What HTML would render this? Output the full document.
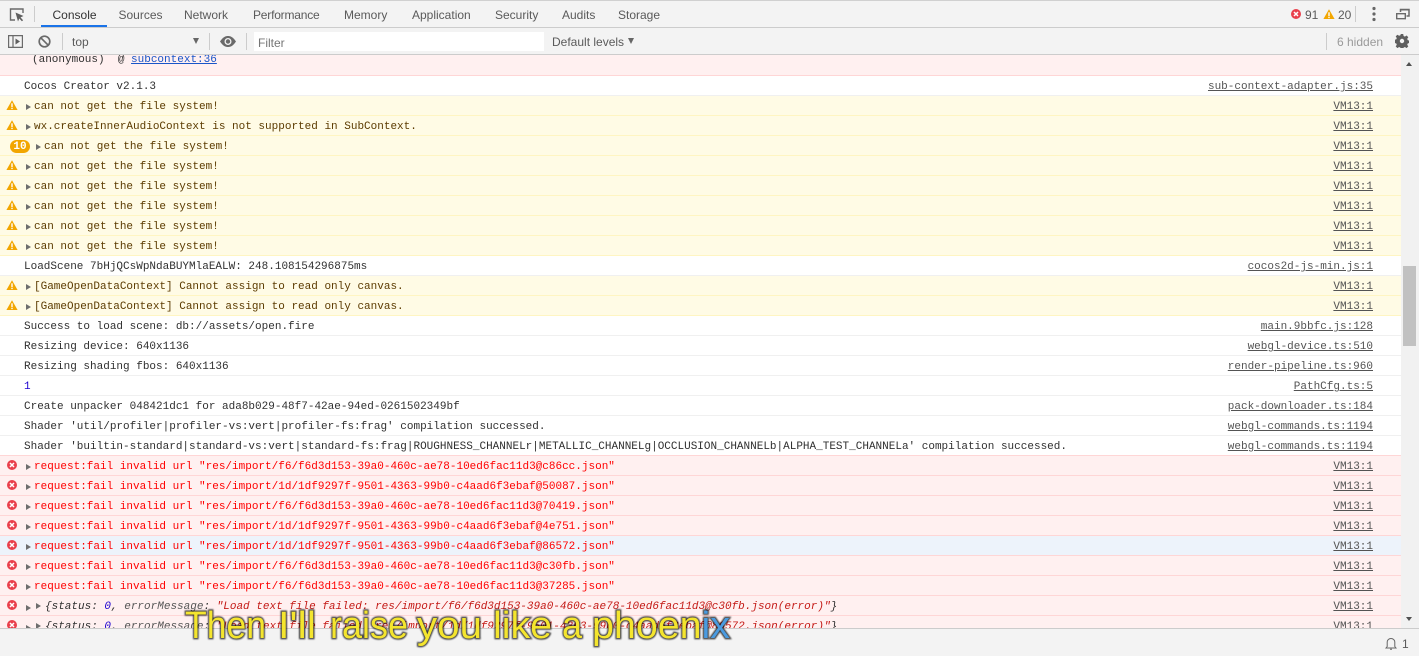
<!DOCTYPE html>
<html><head><meta charset="utf-8"><title>DevTools Console</title>
<style>
html,body{margin:0;padding:0;width:1419px;height:656px;overflow:hidden;background:#fff}
#app{position:relative;width:1419px;height:656px;overflow:hidden;font-family:"Liberation Sans",sans-serif;font-size:12px;color:#333}
.bar{position:absolute;left:0;width:1419px;background:#f3f3f3;box-sizing:border-box}
.t{position:absolute;top:8px;line-height:14px;color:#5a5a5a;white-space:nowrap}
.sep{position:absolute;width:1px;background:#ccc}
#log{position:absolute;left:0;top:55px;width:1401px;height:573px;overflow:hidden;font-family:"Liberation Mono",monospace;font-size:11px;color:#303030}
.r{position:absolute;left:0;width:1401px;height:20px;box-sizing:border-box;border-bottom:1px solid #f0f0f0;background:#fff;line-height:20px;white-space:pre}
.w{background:#fffbe5;border-bottom-color:#fff5c2;color:#5c3b00}
.e{background:#fff0f0;border-bottom-color:#ffd6d6;color:#f00}
.s{background:#edf3fb}
.m{position:absolute;left:24px;top:1px}
.a .m{left:34px}
.l{position:absolute;right:28px;top:1px;color:#545454;text-decoration:underline}
.a:before{content:"";position:absolute;left:26px;top:8px;border-left:5px solid #6e6e6e;border-top:3px solid transparent;border-bottom:3px solid transparent}
.x:before{top:9px}
.ar2{position:absolute;left:36px;top:7px;border-left:5px solid #6e6e6e;border-top:3px solid transparent;border-bottom:3px solid transparent}
.ic{position:absolute;left:6px;top:3px;width:12px;height:12px}
.st{color:#303030;font-style:italic}.st i{color:#c41a16}.st b{font-weight:normal;color:#1c00cf}.st u{text-decoration:none;color:#565656}
#sb{position:absolute;left:1401px;top:55px;width:18px;height:573px;background:#f1f1f1}
</style></head>
<body><div id="app">
<svg width="0" height="0" style="position:absolute"><defs>
<g id="wi"><path d="M6 1.200 11.600 11H.4Z" fill="#f2a600"/><rect x="5.300" y="4.300" width="1.400" height="3.700" fill="#fff"/><rect x="5.300" y="8.700" width="1.400" height="1.400" fill="#fff"/></g>
<g id="ei"><circle cx="6" cy="6" r="5" fill="#e9404c"/><path d="M4 4l4 4M8 4 4 8" stroke="#fff" stroke-width="1.500"/></g>
<linearGradient id="gr" gradientUnits="userSpaceOnUse" x1="0" y1="0" x2="1419" y2="0"><stop offset="0.4955" stop-color="#f4e52e"/><stop offset="0.4956" stop-color="#4a9be0"/></linearGradient>
<filter id="bl" x="-5%" y="-30%" width="110%" height="160%"><feGaussianBlur stdDeviation="0.8"/></filter>
</defs></svg>

<div class="bar" style="top:0;height:28px;border-top:1px solid #d0d0d0;border-bottom:1px solid #ccc"></div>
<svg style="position:absolute;left:9px;top:7px" width="16" height="16" viewBox="0 0 16 16"><path d="M6 13H1.500V2H14V6" fill="none" stroke="#6a6a6a" stroke-width="1.400"/><path d="M6.500 5.500 14.500 9l-3 1.400 2.600 2.800-1.200 1.100-2.600-2.800L9 14.500Z" fill="#5f5f5f"/></svg>
<div class="sep" style="left:34px;top:6px;height:16px"></div>
<div style="position:absolute;left:41px;top:25px;width:66px;height:2px;background:#1a73e8"></div>
<div class="t" style="left:52.500px;color:#333">Console</div>
<div class="t" style="left:118.500px">Sources</div>
<div class="t" style="left:184px">Network</div>
<div class="t" style="left:253px;letter-spacing:-.2px">Performance</div>
<div class="t" style="left:344px">Memory</div>
<div class="t" style="left:412px">Application</div>
<div class="t" style="left:495px">Security</div>
<div class="t" style="left:562px">Audits</div>
<div class="t" style="left:618px">Storage</div>
<svg style="position:absolute;left:1290px;top:8px" width="12" height="12"><use href="#ei"/></svg>
<div class="t" style="left:1305px">91</div>
<svg style="position:absolute;left:1323px;top:8px" width="12" height="12"><use href="#wi"/></svg>
<div class="t" style="left:1338px">20</div>
<div class="sep" style="left:1355px;top:6px;height:16px"></div>
<svg style="position:absolute;left:1370px;top:6px" width="8" height="16"><circle cx="4" cy="2.500" r="1.600" fill="#666"/><circle cx="4" cy="8" r="1.600" fill="#666"/><circle cx="4" cy="13.500" r="1.600" fill="#666"/></svg>
<svg style="position:absolute;left:1396px;top:8px" width="14" height="12" viewBox="0 0 14 12"><path d="M4.500 4V1.500H13V8h-2.500" fill="none" stroke="#6a6a6a" stroke-width="1.500"/><path d="M.7 5.700h8.600v5H.7Z" fill="none" stroke="#6a6a6a" stroke-width="1.400"/><rect x="4" y="1" width="9" height="1.500" fill="#6a6a6a"/></svg>

<div class="bar" style="top:28px;height:27px;border-bottom:1px solid #ccc"></div>
<svg style="position:absolute;left:8px;top:35px" width="15" height="13" viewBox="0 0 15 13"><path d="M.6.6h13.800v11.800H.6ZM5 .6v11.800" fill="none" stroke="#6a6a6a" stroke-width="1.200"/><path d="M7.500 3.500 12 6.500l-4.500 3Z" fill="#5f5f5f"/></svg>
<svg style="position:absolute;left:38px;top:35px" width="13" height="13" viewBox="0 0 13 13"><circle cx="6.500" cy="6.500" r="5.300" fill="none" stroke="#6a6a6a" stroke-width="1.700"/><path d="M2.800 2.800l7.400 7.400" stroke="#6a6a6a" stroke-width="1.700"/></svg>
<div class="sep" style="left:62px;top:33px;height:17px"></div>
<div class="t" style="left:72px;top:35px">top</div>
<div style="position:absolute;left:193px;top:38px;border-top:6px solid #666;border-left:3.500px solid transparent;border-right:3.500px solid transparent"></div>
<div class="sep" style="left:209px;top:33px;height:17px"></div>
<svg style="position:absolute;left:220px;top:36px" width="16" height="11" viewBox="0 0 16 11"><path d="M0 5.500C3 1 5.500 0 8 0s5 1 8 5.500C13 10 10.500 11 8 11S3 10 0 5.500Z" fill="#6a6a6a"/><circle cx="8" cy="5.500" r="3.500" fill="#f3f3f3"/><circle cx="8" cy="5.500" r="2.200" fill="#6a6a6a"/></svg>
<div class="sep" style="left:246px;top:33px;height:17px"></div>
<div style="position:absolute;left:254px;top:32px;width:290px;height:19px;background:#fff"></div>
<div class="t" style="left:258px;top:36px;color:#757575">Filter</div>
<div class="t" style="left:552px;top:35px">Default levels</div>
<div style="position:absolute;left:628px;top:38px;border-top:6px solid #666;border-left:3.500px solid transparent;border-right:3.500px solid transparent"></div>
<div class="sep" style="left:1326px;top:33px;height:17px"></div>
<div class="t" style="left:1337px;top:35px;color:#9a9a9a">6 hidden</div>
<svg style="position:absolute;left:1395px;top:34px" width="14" height="14" viewBox="0 0 14 14"><path d="M5.800 0h2.400l.4 2 1.300.6 1.700-1.100 1.700 1.700-1.100 1.700.6 1.300 2 .4v2.400l-2 .4-.6 1.300 1.100 1.700-1.700 1.700-1.700-1.100-1.300.6-.4 2H5.800l-.4-2-1.300-.6-1.700 1.100-1.700-1.700 1.100-1.700-.6-1.300-2-.4V5.800l2-.4.6-1.300-1.100-1.700 1.700-1.700 1.700 1.100 1.300-.6ZM7 4.800A2.200 2.200 0 1 0 7 9.200 2.200 2.200 0 0 0 7 4.800Z" fill="#5f5f5f" fill-rule="evenodd"/></svg>

<div id="log">
<div class="r e" style="top:0;height:21px;color:#303030"><span class="m" style="left:32px;top:-5px">(anonymous)  @ <span style="color:#1a55c8;text-decoration:underline">subcontext:36</span></span></div>
<div class="r" style="top:21px"><span class="m">Cocos Creator v2.1.3</span><span class="l">sub-context-adapter.js:35</span></div>
<div class="r w a" style="top:41px"><svg class="ic"><use href="#wi"/></svg><span class="m">can not get the file system!</span><span class="l">VM13:1</span></div>
<div class="r w a" style="top:61px"><svg class="ic"><use href="#wi"/></svg><span class="m">wx.createInnerAudioContext is not supported in SubContext.</span><span class="l">VM13:1</span></div>
<div class="r w" style="top:81px"><span style="position:absolute;left:10px;top:4px;width:20px;height:13px;border-radius:7px;background:#f2a600;color:#fff;font-weight:bold;text-align:center;line-height:14px">10</span><span class="ar2" style="top:8px"></span><span class="m" style="left:44px">can not get the file system!</span><span class="l">VM13:1</span></div>
<div class="r w a" style="top:101px"><svg class="ic"><use href="#wi"/></svg><span class="m">can not get the file system!</span><span class="l">VM13:1</span></div>
<div class="r w a" style="top:121px"><svg class="ic"><use href="#wi"/></svg><span class="m">can not get the file system!</span><span class="l">VM13:1</span></div>
<div class="r w a" style="top:141px"><svg class="ic"><use href="#wi"/></svg><span class="m">can not get the file system!</span><span class="l">VM13:1</span></div>
<div class="r w a" style="top:161px"><svg class="ic"><use href="#wi"/></svg><span class="m">can not get the file system!</span><span class="l">VM13:1</span></div>
<div class="r w a" style="top:181px"><svg class="ic"><use href="#wi"/></svg><span class="m">can not get the file system!</span><span class="l">VM13:1</span></div>
<div class="r" style="top:201px"><span class="m">LoadScene 7bHjQCsWpNdaBUYMlaEALW: 248.108154296875ms</span><span class="l">cocos2d-js-min.js:1</span></div>
<div class="r w a" style="top:221px"><svg class="ic"><use href="#wi"/></svg><span class="m">[GameOpenDataContext] Cannot assign to read only canvas.</span><span class="l">VM13:1</span></div>
<div class="r w a" style="top:241px"><svg class="ic"><use href="#wi"/></svg><span class="m">[GameOpenDataContext] Cannot assign to read only canvas.</span><span class="l">VM13:1</span></div>
<div class="r" style="top:261px"><span class="m">Success to load scene: db://assets/open.fire</span><span class="l">main.9bbfc.js:128</span></div>
<div class="r" style="top:281px"><span class="m">Resizing device: 640x1136</span><span class="l">webgl-device.ts:510</span></div>
<div class="r" style="top:301px"><span class="m">Resizing shading fbos: 640x1136</span><span class="l">render-pipeline.ts:960</span></div>
<div class="r" style="top:321px"><span class="m" style="color:#1c00cf">1</span><span class="l">PathCfg.ts:5</span></div>
<div class="r" style="top:341px"><span class="m">Create unpacker 048421dc1 for ada8b029-48f7-42ae-94ed-0261502349bf</span><span class="l">pack-downloader.ts:184</span></div>
<div class="r" style="top:361px"><span class="m">Shader 'util/profiler|profiler-vs:vert|profiler-fs:frag' compilation successed.</span><span class="l">webgl-commands.ts:1194</span></div>
<div class="r" style="top:381px;border-bottom-color:#ffd6d6"><span class="m">Shader 'builtin-standard|standard-vs:vert|standard-fs:frag|ROUGHNESS_CHANNELr|METALLIC_CHANNELg|OCCLUSION_CHANNELb|ALPHA_TEST_CHANNELa' compilation successed.</span><span class="l">webgl-commands.ts:1194</span></div>
<div class="r e a" style="top:401px"><svg class="ic"><use href="#ei"/></svg><span class="m">request:fail invalid url "res/import/f6/f6d3d153-39a0-460c-ae78-10ed6fac11d3@c86cc.json"</span><span class="l">VM13:1</span></div>
<div class="r e a" style="top:421px"><svg class="ic"><use href="#ei"/></svg><span class="m">request:fail invalid url "res/import/1d/1df9297f-9501-4363-99b0-c4aad6f3ebaf@50087.json"</span><span class="l">VM13:1</span></div>
<div class="r e a" style="top:441px"><svg class="ic"><use href="#ei"/></svg><span class="m">request:fail invalid url "res/import/f6/f6d3d153-39a0-460c-ae78-10ed6fac11d3@70419.json"</span><span class="l">VM13:1</span></div>
<div class="r e a" style="top:461px"><svg class="ic"><use href="#ei"/></svg><span class="m">request:fail invalid url "res/import/1d/1df9297f-9501-4363-99b0-c4aad6f3ebaf@4e751.json"</span><span class="l">VM13:1</span></div>
<div class="r e a s" style="top:481px"><svg class="ic"><use href="#ei"/></svg><span class="m">request:fail invalid url "res/import/1d/1df9297f-9501-4363-99b0-c4aad6f3ebaf@86572.json"</span><span class="l">VM13:1</span></div>
<div class="r e a" style="top:501px"><svg class="ic"><use href="#ei"/></svg><span class="m">request:fail invalid url "res/import/f6/f6d3d153-39a0-460c-ae78-10ed6fac11d3@c30fb.json"</span><span class="l">VM13:1</span></div>
<div class="r e a" style="top:521px"><svg class="ic"><use href="#ei"/></svg><span class="m">request:fail invalid url "res/import/f6/f6d3d153-39a0-460c-ae78-10ed6fac11d3@37285.json"</span><span class="l">VM13:1</span></div>
<div class="r e a x" style="top:541px"><svg class="ic"><use href="#ei"/></svg><span class="ar2"></span><span class="m st" style="left:45px">{status: <b>0</b>, <u>errorMessage</u>: <i>"Load text file failed: res/import/f6/f6d3d153-39a0-460c-ae78-10ed6fac11d3@c30fb.json(error)"</i>}</span><span class="l">VM13:1</span></div>
<div class="r e a x" style="top:561px"><svg class="ic"><use href="#ei"/></svg><span class="ar2"></span><span class="m st" style="left:45px">{status: <b>0</b>, <u>errorMessage</u>: <i>"Load text file failed: res/import/1d/1df9297f-9501-4363-99b0-c4aad6f3ebaf@86572.json(error)"</i>}</span><span class="l">VM13:1</span></div>
</div>

<div id="sb">
<div style="position:absolute;left:2px;top:211px;width:13px;height:80px;background:#c1c1c1"></div>
<div style="position:absolute;left:5px;top:7px;border-bottom:4px solid #505050;border-left:3.500px solid transparent;border-right:3.500px solid transparent"></div>
<div style="position:absolute;left:5px;top:562px;border-top:4px solid #505050;border-left:3.500px solid transparent;border-right:3.500px solid transparent"></div>
</div>

<div class="bar" style="top:628px;height:28px;border-top:1px solid #ccc"></div>
<svg style="position:absolute;left:1385px;top:637px" width="12" height="14" viewBox="0 0 12 14"><path d="M1 11h10L9.800 9.500V5C9.800 3 8 1.500 6 1.500S2.200 3 2.200 5v4.500ZM5 12.300h2" fill="none" stroke="#666" stroke-width="1"/></svg>
<div class="t" style="left:1402px;top:637px">1</div>

<svg style="position:absolute;left:0;top:0;pointer-events:none" width="1419" height="656" font-family="'Liberation Sans',sans-serif" font-size="38">
<g fill="#000" stroke="#000" stroke-width="2.400" opacity=".75" filter="url(#bl)">
<text x="185" y="638" textLength="81" lengthAdjust="spacingAndGlyphs">Then</text>
<text x="278" y="638" textLength="38" lengthAdjust="spacingAndGlyphs">I'll</text>
<text x="330" y="638" textLength="78" lengthAdjust="spacingAndGlyphs">raise</text>
<text x="417" y="638" textLength="65" lengthAdjust="spacingAndGlyphs">you</text>
<text x="493" y="638" textLength="59" lengthAdjust="spacingAndGlyphs">like</text>
<text x="562" y="638" textLength="20" lengthAdjust="spacingAndGlyphs">a</text>
<text x="592" y="638" textLength="138" lengthAdjust="spacingAndGlyphs">phoenix</text>
</g>
<g fill="url(#gr)">
<text x="185" y="638" textLength="81" lengthAdjust="spacingAndGlyphs">Then</text>
<text x="278" y="638" textLength="38" lengthAdjust="spacingAndGlyphs">I'll</text>
<text x="330" y="638" textLength="78" lengthAdjust="spacingAndGlyphs">raise</text>
<text x="417" y="638" textLength="65" lengthAdjust="spacingAndGlyphs">you</text>
<text x="493" y="638" textLength="59" lengthAdjust="spacingAndGlyphs">like</text>
<text x="562" y="638" textLength="20" lengthAdjust="spacingAndGlyphs">a</text>
<text x="592" y="638" textLength="138" lengthAdjust="spacingAndGlyphs">phoenix</text>
</g>
</svg>
</div></body></html>
